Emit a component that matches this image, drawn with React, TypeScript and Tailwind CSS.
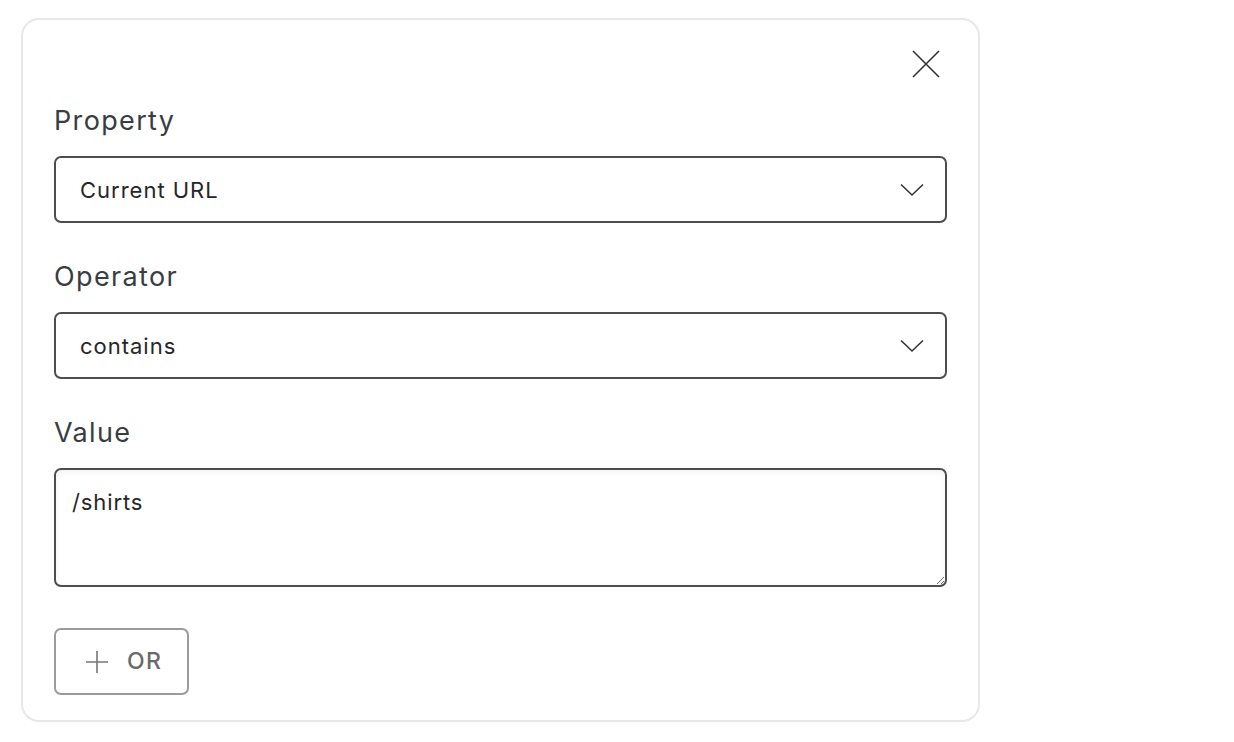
import React from "react";

const ChevronDown = () => (
  <svg width="24" height="14" viewBox="0 0 24 14" fill="none" stroke="#333" strokeWidth="1.6">
    <path d="M1 1.5 L12 12 L23 1.5" />
  </svg>
);

const Field = ({ label, children }: { label: string; children: React.ReactNode }) => (
  <div className="flex flex-col">
    <label className="text-[27px] leading-8 pt-px tracking-[0.05em] text-[#383d42] mb-[19px]">{label}</label>
    {children}
  </div>
);

const SelectBox = ({ value }: { value: string }) => (
  <div className="h-[67px] flex items-center justify-between pl-[24px] pr-[21px] pt-px border-2 border-[#4d4d4d] rounded-[7px] text-[22px] tracking-[0.045em] text-[#262626]">
    <span>{value}</span>
    <ChevronDown />
  </div>
);

export default function App() {
  return (
    <div className="min-h-screen bg-white p-[18px_0_0_21px] font-['Inter',sans-serif]">
      <div className="w-[959px] h-[704px] border-2 border-[#e8e8e8] rounded-[18px] bg-white px-[31px] pt-[30px]">
        <div className="flex justify-end pr-[7px]">
          <button className="w-[28px] h-[28px]">
            <svg width="28" height="28" viewBox="0 0 28 28" stroke="#333" strokeWidth="1.6">
              <path d="M1 1 L27 27 M27 1 L1 27" />
            </svg>
          </button>
        </div>
        <div className="flex flex-col gap-[37px] mt-[26px]">
          <Field label="Property">
            <SelectBox value="Current URL" />
          </Field>
          <Field label="Operator">
            <SelectBox value="contains" />
          </Field>
          <Field label="Value">
            <textarea
              defaultValue="/shirts"
              className="h-[119px] border-2 border-[#4d4d4d] rounded-[7px] px-4 pt-[18px] text-[22px] tracking-[0.04em] leading-7 text-[#262626] shadow-[inset_0_2px_6px_rgba(0,0,0,0.06)] outline-none"
            />
          </Field>
        </div>
        <button className="mt-[41px] w-[135px] h-[67px] border-2 border-[#9b9b9b] rounded-[7px] flex items-center pl-[30px] gap-[19px] text-[#6a6a6a]">
          <svg width="22" height="22" viewBox="0 0 22 22" stroke="#777" strokeWidth="1.6">
            <path d="M11 0 V22 M0 11 H22" />
          </svg>
          <span className="text-[23px] font-medium tracking-[0.06em]">OR</span>
        </button>
      </div>
    </div>
  );
}
